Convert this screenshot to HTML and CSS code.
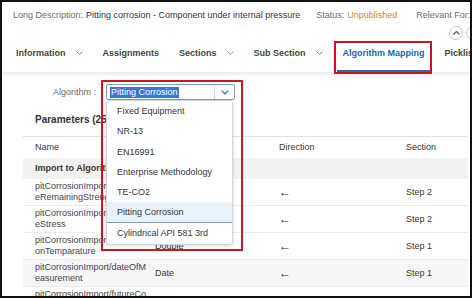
FILE: index.html
```html
<!DOCTYPE html>
<html lang="en">
<head>
  <meta charset="UTF-8">
  <meta name="viewport" content="width=device-width, initial-scale=1.0">
  <title>Algorithm Mapping</title>
  <link rel="stylesheet" href="styles.css">
</head>
<body>
  <div class="frame">
    <!-- object header -->
    <header class="object-header">
      <span class="label">Long Description:</span>
      <span class="value">Pitting corrosion - Component under internal pressure</span>
      <span class="label">Status:</span>
      <span class="status">Unpublished</span>
      <span class="label">Relevant For:</span>
    </header>
    <div class="header-actions">
      <button class="round-btn">
        <svg width="7" height="4" viewBox="0 0 7 4"><path d="M0.5 3.5 L3.5 0.5 L6.5 3.5" fill="none" stroke="#2f5d8a" stroke-width="1.1"/></svg>
      </button>
      <button class="round-btn"></button>
    </div>

    <!-- tab bar -->
    <nav class="tabs">
      <div class="tab"><span class="tab-label">Information
        <svg width="7" height="4" viewBox="0 0 7 4"><path d="M0.5 0.5 L3.5 3.5 L6.5 0.5" fill="none" stroke="#8a8e92" stroke-width="1"/></svg></span></div>
      <div class="tab"><span class="tab-label">Assignments</span></div>
      <div class="tab"><span class="tab-label">Sections
        <svg width="7" height="4" viewBox="0 0 7 4"><path d="M0.5 0.5 L3.5 3.5 L6.5 0.5" fill="none" stroke="#8a8e92" stroke-width="1"/></svg></span></div>
      <div class="tab"><span class="tab-label">Sub Section
        <svg width="7" height="4" viewBox="0 0 7 4"><path d="M0.5 0.5 L3.5 3.5 L6.5 0.5" fill="none" stroke="#8a8e92" stroke-width="1"/></svg></span></div>
      <div class="tab active"><span class="tab-label">Algorithm Mapping</span></div>
      <div class="tab"><span class="tab-label">Picklist</span></div>
    </nav>

    <section class="content">
      <div class="algo-row">
        <span class="algo-label">Algorithm :</span>
        <div class="select-wrap">
          <div class="select">
            <span class="select-text"><span class="selected">Pitting Corrosion</span></span>
            <span class="select-btn">
              <svg width="8" height="5" viewBox="0 0 8 5"><path d="M0.7 0.7 L4 4 L7.3 0.7" fill="none" stroke="#0a6ed1" stroke-width="1.2"/></svg>
            </span>
          </div>
          <ul class="popup">
            <li>Fixed Equipment</li>
            <li>NR-13</li>
            <li>EN16991</li>
            <li>Enterprise Methodology</li>
            <li>TE-CO2</li>
            <li class="current">Pitting Corrosion</li>
            <li>Cylindrical API 581 3rd</li>
          </ul>
        </div>
      </div>

      <h3 class="params-title">Parameters (25)</h3>

      <div class="table">
        <div class="row thead">
          <div class="cell">Name</div>
          <div class="cell">Type</div>
          <div class="cell">Direction</div>
          <div class="cell">Section</div>
        </div>
        <div class="row group">
          <div class="cell">Import to Algorithm</div>
        </div>
        <div class="row">
          <div class="cell name">pitCorrosionImport/futur<br>eRemainingStrength</div>
          <div class="cell">Double</div>
          <div class="cell arrow">&larr;</div>
          <div class="cell">Step 2</div>
        </div>
        <div class="row">
          <div class="cell name">pitCorrosionImport/futur<br>eStress</div>
          <div class="cell">Double</div>
          <div class="cell arrow">&larr;</div>
          <div class="cell">Step 2</div>
        </div>
        <div class="row">
          <div class="cell name">pitCorrosionImport/operati<br>onTemparature</div>
          <div class="cell">Double</div>
          <div class="cell arrow">&larr;</div>
          <div class="cell">Step 1</div>
        </div>
        <div class="row hover">
          <div class="cell name">pitCorrosionImport/dateOfM<br>easurement</div>
          <div class="cell">Date</div>
          <div class="cell arrow">&larr;</div>
          <div class="cell">Step 1</div>
        </div>
        <div class="row">
          <div class="cell name">pitCorrosionImport/futureCo<br>rrosionRate</div>
          <div class="cell">Double</div>
          <div class="cell arrow">&larr;</div>
          <div class="cell">Step 1</div>
        </div>
      </div>
    </section>
  </div>
</body>
</html>
```

FILE: styles.css
```css
* {
  box-sizing: border-box;
}

body {
  margin: 0;
  font-family: "Liberation Sans", Arial, sans-serif;
  font-size: 9px;
  color: #32363a;
  background: #fff;
}

.frame {
  position: relative;
  width: 472px;
  height: 298px;
  border: 2px solid #111;
  overflow: hidden;
  background: #fff;
}

/* header */
.object-header {
  display: flex;
  align-items: flex-start;
  height: 39px;
  padding: 7px 0 0 11px;
  line-height: 13px;
  white-space: nowrap;
}
.object-header .label {
  color: #6a6d70;
  margin-right: 3px;
}
.object-header .value {
  margin-right: 16px;
}
.object-header .status {
  color: #d4832f;
  margin-right: 19px;
}

.header-actions {
  position: absolute;
  top: 24px;
  left: 447px;
  display: flex;
  gap: 3px;
}
.round-btn {
  display: flex;
  align-items: center;
  justify-content: center;
  width: 14px;
  height: 14px;
  padding: 0;
  border: 1px solid #c3c7cb;
  border-radius: 50%;
  background: #fff;
}

/* tabs */
.tabs {
  position: relative;
  z-index: 1;
  display: flex;
  height: 31px;
  padding-left: 4px;
  background: #fff;
  box-shadow: 0 3px 4px rgba(0, 0, 0, 0.08);
}
.tab {
  position: relative;
  flex-shrink: 0;
  height: 31px;
  margin: 0 4px;
  padding: 6px 6px 0;
  border-bottom: 2px solid transparent;
  font-weight: bold;
  line-height: 12px;
  color: #3f4448;
  white-space: nowrap;
}
.tab-label {
  display: flex;
  align-items: center;
  gap: 10px;
  height: 12px;
}
.tab.active {
  color: #1866b4;
  border-bottom-color: #1f6fc0;
}
.tab.active::after {
  content: '';
  position: absolute;
  top: 0;
  left: -3px;
  right: -1px;
  bottom: -4px;
  border: 2px solid #cc1424;
}

/* content */
.content {
  padding: 12px 2px 0 21px;
}

.algo-row {
  display: flex;
  align-items: center;
  gap: 10px;
  height: 16px;
  padding-left: 30px;
}
.algo-label {
  color: #6a6d70;
}

.select-wrap {
  position: relative;
  z-index: 2;
}
.select-wrap::after {
  content: '';
  position: absolute;
  top: -4px;
  left: -5px;
  width: 138px;
  height: 167px;
  border: 2px solid #cc1424;
}
.select {
  display: flex;
  width: 129px;
  height: 16px;
  border: 1px solid #7d9fcc;
  border-radius: 2px;
  background: #fff;
}
.select-text {
  flex: 1;
  display: flex;
  align-items: center;
  padding-left: 3px;
}
.selected {
  padding: 0 1px;
  line-height: 11px;
  background: #3977d6;
  color: #fff;
}
.select-btn {
  display: flex;
  align-items: center;
  justify-content: center;
  width: 20px;
  border-left: 1px solid #d6dbe0;
}

.popup {
  position: absolute;
  top: 16px;
  left: 0;
  width: 127px;
  margin: 0;
  padding: 0 0 1px;
  list-style: none;
  background: #fff;
  border: 1px solid #d3d6d9;
  border-radius: 3px;
  box-shadow: 0 1px 4px rgba(0, 0, 0, 0.15);
}
.popup li {
  height: 20.3px;
  padding-left: 10px;
  line-height: 20px;
  white-space: nowrap;
}
.popup li.current {
  background: #e8f2fb;
  border-bottom: 1px solid #6f9bcd;
}

.params-title {
  margin: 13px 0 0 12px;
  font-size: 10px;
  line-height: 14px;
  font-weight: bold;
}

/* table */
.table {
  margin-top: 9px;
  border-top: 1px solid #e2e2e2;
}
.row {
  display: grid;
  grid-template-columns: 128px 124px 127px 1fr;
  align-items: center;
  height: 27px;
  border-bottom: 1px solid #ececec;
}
.row.thead {
  height: 21px;
  border-bottom: 0;
}
.row.group {
  height: 21px;
  border-bottom: 0;
  background: #f2f2f2;
  font-weight: bold;
}
.row.group .cell {
  grid-column: 1 / -1;
}
.row.hover {
  background: #f6f6f6;
}
.cell {
  padding: 0 4px;
  line-height: 11px;
  white-space: nowrap;
}
.cell:first-child {
  padding-left: 12px;
}
.cell.name {
  color: #42464a;
}
.cell.arrow {
  font-size: 12px;
  color: #2b2e31;
}
```
